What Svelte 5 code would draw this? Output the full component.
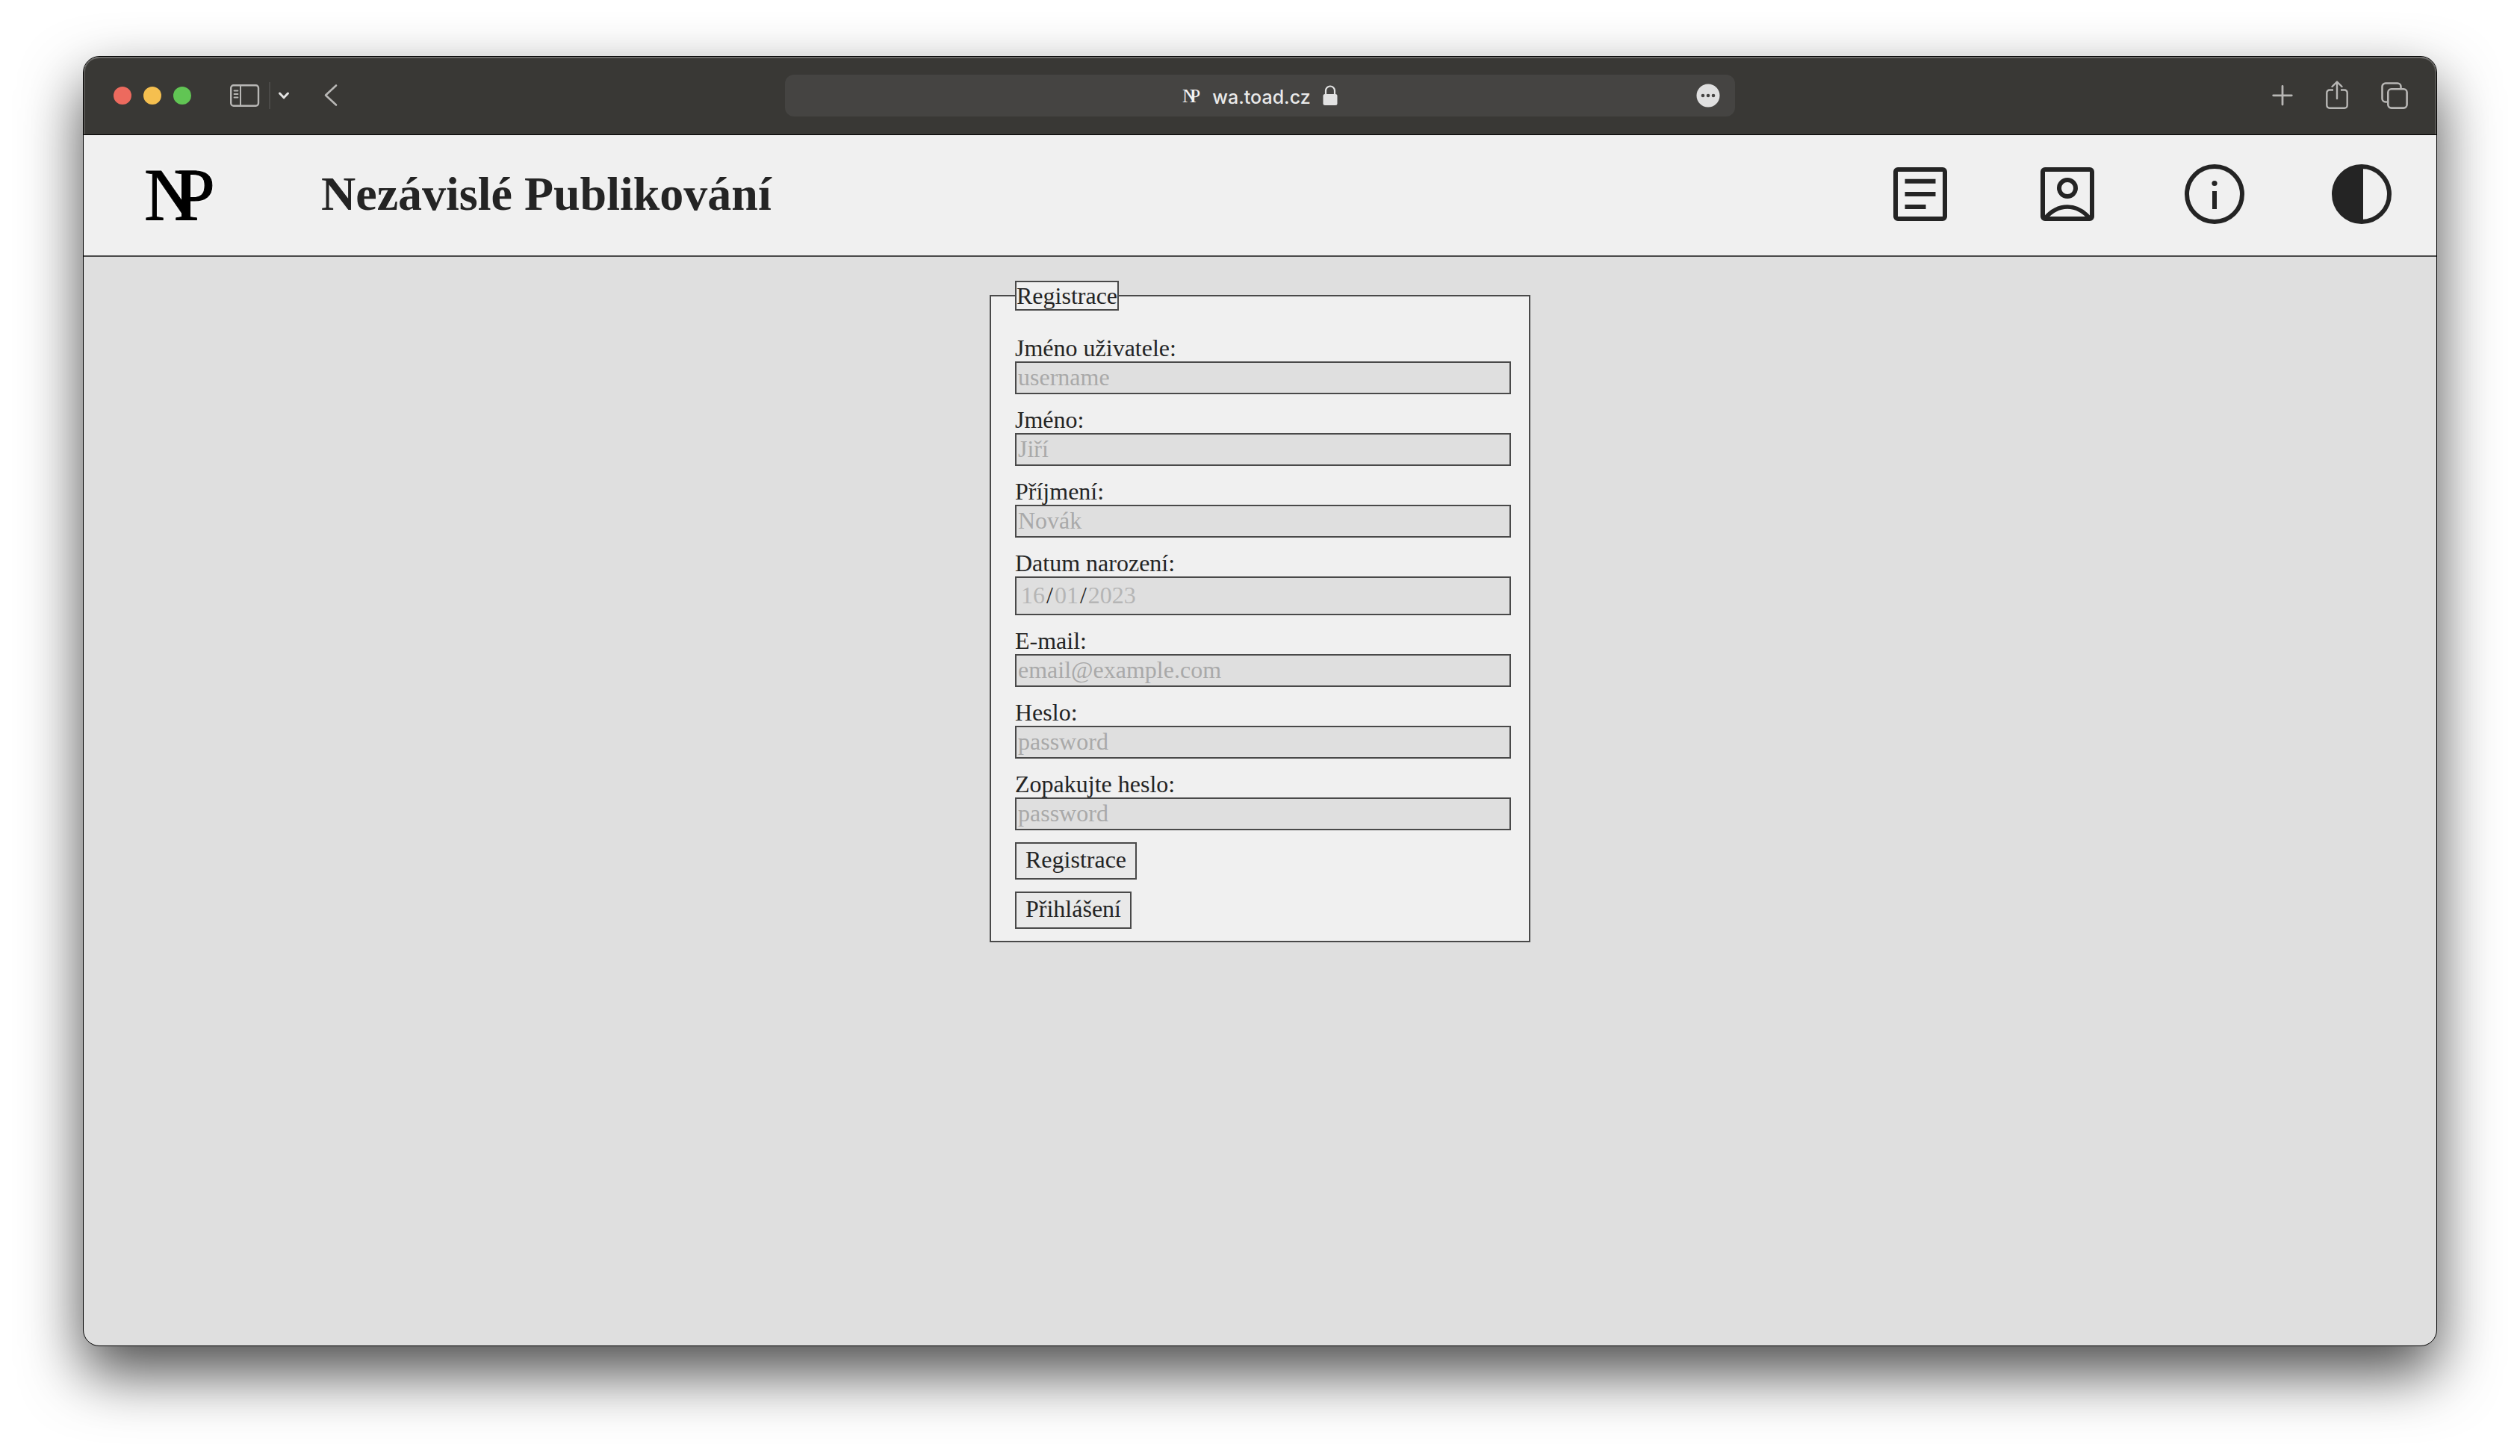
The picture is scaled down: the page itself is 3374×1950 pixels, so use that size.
<script>
  const before = [
    { id: 'username', label: 'Jméno uživatele:', type: 'text', placeholder: 'username' },
    { id: 'firstname', label: 'Jméno:', type: 'text', placeholder: 'Jiří' },
    { id: 'lastname', label: 'Příjmení:', type: 'text', placeholder: 'Novák' }
  ];
  const after = [
    { id: 'email', label: 'E-mail:', type: 'email', placeholder: 'email@example.com' },
    { id: 'password', label: 'Heslo:', type: 'password', placeholder: 'password' },
    { id: 'password2', label: 'Zopakujte heslo:', type: 'password', placeholder: 'password' }
  ];
</script>

{#snippet field(f)}
  <div class="field">
    <label for={f.id}>{f.label}</label>
    <input class="box" id={f.id} type={f.type} placeholder={f.placeholder} />
  </div>
{/snippet}

<div class="desktop">
  <div class="window">
    <div class="toolbar">
      <div class="side left">
        <div class="lights">
          <button class="light red" aria-label="Close"></button>
          <button class="light yellow" aria-label="Minimize"></button>
          <button class="light green" aria-label="Zoom"></button>
        </div>
        <button class="tool sidebar" aria-label="Sidebar">
          <svg width="40" height="32" viewBox="0 0 40 32" fill="none" stroke="#b8b7b5" stroke-width="2.4">
            <rect x="1.2" y="2.2" width="36.8" height="27.6" rx="3.5" />
            <path d="M14 2v28" stroke-width="2" />
            <path d="M5.500 9.500h5M5.500 14h5M5.500 18.500h5" stroke-width="1.800" stroke-linecap="round" />
          </svg>
        </button>
        <span class="divider"></span>
        <button class="tool more" aria-label="Tab groups">
          <svg width="16" height="12" viewBox="0 0 16 12" fill="none" stroke="#e4e4e3" stroke-width="3" stroke-linecap="round" stroke-linejoin="round">
            <path d="M2.500 3 8 8.800 13.500 3" />
          </svg>
        </button>
        <button class="tool" aria-label="Back">
          <svg width="18" height="32" viewBox="0 0 18 32" fill="none" stroke="#b8b7b5" stroke-width="2.600" stroke-linecap="round" stroke-linejoin="round">
            <path d="M16 2.500 2 15.500 16 28.500" />
          </svg>
        </button>
      </div>

      <div class="address">
        <button class="url">
          <svg class="favicon" width="24" height="36" viewBox="0 0 24 36" aria-hidden="true">
            <text x="0" y="27">N<tspan dx="-9">P</tspan></text>
          </svg>
          <span>wa.toad.cz</span>
          <svg width="20" height="28" viewBox="0 0 20 28" aria-hidden="true">
            <rect x="0.500" y="12" width="19" height="15" rx="2.500" fill="#e2e2e2" />
            <path d="M4 13V7.500a6 6 0 0 1 12 0V13" fill="none" stroke="#e2e2e2" stroke-width="2.200" />
          </svg>
        </button>
        <button class="tool dots" aria-label="Page menu">
          <svg width="32" height="32" viewBox="0 0 32 32">
            <circle cx="16" cy="16" r="15.500" fill="#e0e0e0" />
            <g fill="#454442"><circle cx="9" cy="16" r="2.300" /><circle cx="16" cy="16" r="2.300" /><circle cx="23" cy="16" r="2.300" /></g>
          </svg>
        </button>
      </div>

      <div class="side right">
        <button class="tool" aria-label="New tab">
          <svg width="28" height="40" viewBox="0 0 28 40" stroke="#b8b7b5" stroke-width="2.800" stroke-linecap="round">
            <path d="M14 7.500v24.500M1.700 19.800h24.600" />
          </svg>
        </button>
        <button class="tool" aria-label="Share">
          <svg width="30" height="40" viewBox="0 0 30 40" fill="none" stroke="#b8b7b5" stroke-width="2.400" stroke-linecap="round" stroke-linejoin="round">
            <path d="M10 12.500H5A3.700 3.700 0 0 0 1.300 16.200V33A3.700 3.700 0 0 0 5 36.700H25A3.700 3.700 0 0 0 28.700 33V16.200A3.700 3.700 0 0 0 25 12.500H20" stroke-linecap="butt" />
            <path d="M15 24V2M8.500 8 15 1.500 21.500 8" />
          </svg>
        </button>
        <button class="tool" aria-label="Tab overview">
          <svg width="36" height="40" viewBox="0 0 36 40" fill="none" stroke="#b8b7b5" stroke-width="2.600">
            <path d="M9 28.500H6A4.500 4.500 0 0 1 1.500 24V8A4.500 4.500 0 0 1 6 3.500H22A4.500 4.500 0 0 1 26.500 8v3" />
            <rect x="9.300" y="11.300" width="25.300" height="25.300" rx="4.500" />
          </svg>
        </button>
      </div>
    </div>

    <header>
      <a class="logo" href="/" aria-label="Nezávislé Publikování">
        <svg width="108" height="120" viewBox="0 0 108 120" aria-hidden="true">
          <text x="5" y="94">N<tspan dx="-33">P</tspan></text>
        </svg>
      </a>
      <h1>Nezávislé Publikování</h1>
      <nav>
        <a href="/articles" aria-label="Články">
          <svg viewBox="0 0 80 80" fill="none" stroke="#242424" stroke-width="6">
            <rect x="7" y="7" width="66" height="66" rx="3" />
            <path d="M19.500 22.700h41M19.500 40h41M19.500 57h28" />
          </svg>
        </a>
        <a href="/account" aria-label="Účet">
          <svg viewBox="0 0 80 80" fill="none" stroke="#242424" stroke-width="6">
            <rect x="7" y="7" width="66" height="66" rx="3" />
            <circle cx="40" cy="32" r="11" />
            <path d="M10 72.500Q23 57 40 57T70 72.500" stroke-width="5.600" />
          </svg>
        </a>
        <a href="/about" aria-label="Informace">
          <svg viewBox="0 0 80 80" fill="none" stroke="#242424" stroke-width="6">
            <circle cx="40" cy="40" r="37" />
            <path d="M40 36v24" />
            <circle cx="40" cy="25.500" r="3.600" fill="#242424" stroke="none" />
          </svg>
        </a>
        <button aria-label="Kontrast">
          <svg viewBox="0 0 80 80">
            <circle cx="40" cy="40" r="37" fill="none" stroke="#242424" stroke-width="6" />
            <path d="M42 2A38 38 0 1 0 42 78Z" fill="#242424" />
          </svg>
        </button>
      </nav>
    </header>

    <main>
      <form onsubmit={(e) => e.preventDefault()}>
        <fieldset>
          <legend>Registrace</legend>
          <div class="fields">
            {#each before as f}{@render field(f)}{/each}
            <div class="field">
              <label for="day">Datum narození:</label>
              <div class="box date">
                <input id="day" aria-label="Datum narození: den" inputmode="numeric" maxlength="2" placeholder="16" />
                <span>/</span>
                <input aria-label="Měsíc" inputmode="numeric" maxlength="2" placeholder="01" />
                <span>/</span>
                <input class="year" aria-label="Rok" inputmode="numeric" maxlength="4" placeholder="2023" />
              </div>
            </div>
            {#each after as f}{@render field(f)}{/each}
            <button class="action" type="submit">Registrace</button>
            <button class="action" type="button">Přihlášení</button>
          </div>
        </fieldset>
      </form>
    </main>
  </div>
</div>

<style>
  :global(body) {
    margin: 0;
    background: #fff;
  }
  * {
    box-sizing: border-box;
  }
  svg {
    display: block;
  }
  .desktop {
    display: flex;
    min-height: 100vh;
    padding: 75px 111px 147px;
    font-family: 'Liberation Serif', 'Times New Roman', serif;
    color: #242424;
  }
  .window {
    flex: 1;
    display: flex;
    flex-direction: column;
    overflow: hidden;
    border: 1px solid #000;
    border-radius: 22px;
    background: #dfdfdf;
    box-shadow: 0 36px 80px rgba(0, 0, 0, 0.7);
  }

  .toolbar {
    display: grid;
    grid-template-columns: 1fr minmax(300px, 1272px) 1fr;
    align-items: center;
    height: 105px;
    border-bottom: 1px solid #000;
    border-radius: 21px 21px 0 0;
    background: #393835;
    box-shadow: inset 0 2px 0 #6d6c6a, inset 2px 0 0 #565552, inset -2px 0 0 #565552;
  }
  button {
    margin: 0;
    padding: 0;
    border: 0;
    background: none;
    font: inherit;
    color: inherit;
  }
  .side {
    display: flex;
    align-items: center;
  }
  .left {
    padding-left: 40px;
  }
  .right {
    justify-content: flex-end;
    gap: 44px;
    padding-right: 38px;
  }
  .lights {
    display: flex;
    gap: 16px;
    margin-right: 52px;
  }
  .light {
    width: 24px;
    height: 24px;
    border-radius: 50%;
  }
  .red {
    background: #ed6a5e;
  }
  .yellow {
    background: #f5bf4f;
  }
  .green {
    background: #61c554;
  }
  .divider {
    width: 2px;
    height: 36px;
    margin: 0 10px 0 12px;
    background: #4b4a48;
  }
  .more {
    margin-right: 46px;
  }
  .address {
    display: flex;
    align-items: center;
    height: 56px;
    padding: 0 20px;
    border-radius: 12px;
    background: #454442;
  }
  .url {
    flex: 1;
    display: flex;
    align-items: center;
    justify-content: center;
    gap: 16px;
    padding-left: 32px;
    font-family: Inter, 'Liberation Sans', sans-serif;
    font-size: 25px;
    font-weight: 500;
    line-height: 32px;
    color: #e9e9e9;
  }
  .url span {
    padding-top: 3px;
  }
  .favicon {
    overflow: visible;
    font-family: 'Liberation Serif', serif;
    font-size: 26px;
    font-weight: 400;
    fill: #f4f4f4;
  }

  header {
    display: flex;
    align-items: center;
    height: 163px;
    padding: 0 60px 3px 76px;
    border-bottom: 2px solid #494949;
    background: #f0f0f0;
  }
  .logo {
    margin-right: 134px;
    font-size: 100px;
    fill: #000;
    stroke: #000;
    stroke-width: 1;
    filter: drop-shadow(0 0 2px #fff);
  }
  h1 {
    margin: 0;
    font-size: 64px;
    font-weight: 700;
    line-height: 74px;
  }
  nav {
    display: flex;
    gap: 117px;
    margin-left: auto;
  }
  nav svg {
    width: 80px;
    height: 80px;
  }

  main {
    flex: 1;
    padding: 32px;
    font-size: 32px;
    line-height: 36px;
  }
  form {
    width: 100%;
    max-width: 724px;
    margin: 0 auto;
  }
  fieldset {
    min-width: 0;
    margin: 0;
    padding: 32px 24px 16px 32px;
    border: 2px solid #494949;
    background: #f0f0f0;
  }
  legend {
    padding: 0;
    border: 2px solid #494949;
    background: #f0f0f0;
  }
  .fields {
    display: flex;
    flex-direction: column;
    align-items: flex-start;
    gap: 16px;
  }
  .field {
    width: 100%;
  }
  label {
    display: block;
  }
  input {
    font: inherit;
    color: #242424;
    border-radius: 0;
    outline: none;
  }
  input::placeholder {
    color: #a9a9a9;
    opacity: 1;
  }
  .box {
    display: block;
    width: 100%;
    height: 44px;
    padding: 0 2px 2px;
    border: 2px solid #494949;
    background: #dfdfdf;
  }
  .date {
    display: flex;
    align-items: center;
    height: 52px;
    padding: 0 4px 2px;
  }
  .date input {
    width: 36px;
    height: 36px;
    padding: 0 2px;
    border: 0;
    background: none;
  }
  .date .year {
    width: 70px;
  }
  .date input::placeholder {
    color: #b5b5b5;
  }
  .action {
    height: 50px;
    padding: 3px 12px 7px;
    border: 2px solid #494949;
    background: #e9e9e9;
  }
</style>
